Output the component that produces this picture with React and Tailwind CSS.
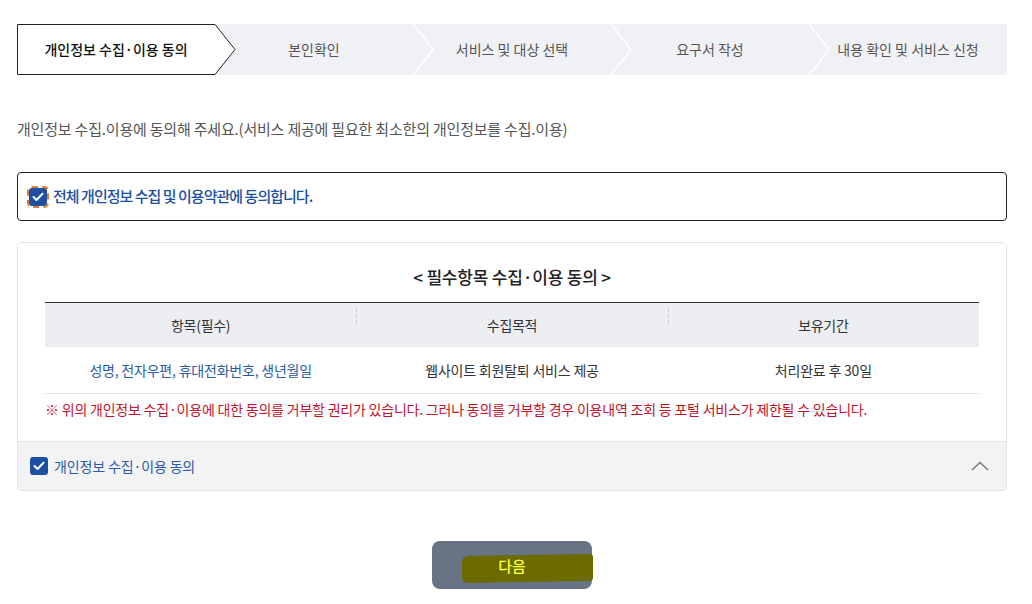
import React from 'react';

const font = { fontFamily: '"Noto Sans CJK KR", "Noto Sans", sans-serif' };

const steps = ['개인정보 수집·이용 동의', '본인확인', '서비스 및 대상 선택', '요구서 작성', '내용 확인 및 서비스 신청'];

const CheckBox = ({ focused }) => (
  <span
    className={`flex h-[18px] w-[18px] shrink-0 items-center justify-center rounded-[3px] bg-[#1d4fa3] ${
      focused ? 'outline-2 outline-dashed outline-[#e8792c] outline-offset-0' : ''
    }`}
  >
    <svg width="12" height="10" viewBox="0 0 12 10" fill="none">
      <path d="M1.5 5 L4.5 8 L10.5 1.8" stroke="white" strokeWidth="2" strokeLinecap="round" strokeLinejoin="round" />
    </svg>
  </span>
);

const Stepper = () => (
  <div className="relative flex h-[51px] w-[990px] bg-[#f0f1f4]">
    <svg className="absolute left-0 top-0" width="990" height="51" viewBox="0 0 990 51" fill="none">
      <path d="M0.5 0.5 H198 L218 25.5 L198 50.5 H0.5 Z" fill="white" stroke="#222" strokeWidth="1" />
      <path d="M396 0 L416 25.5 L396 51" stroke="white" strokeWidth="1.5" />
      <path d="M594 0 L614 25.5 L594 51" stroke="white" strokeWidth="1.5" />
      <path d="M792 0 L812 25.5 L792 51" stroke="white" strokeWidth="1.5" />
    </svg>
    {steps.map((s, i) => (
      <div
        key={s}
        className={`relative z-10 flex w-[198px] items-center justify-center text-[14px] ${
          i === 0 ? 'text-[#111] font-medium' : 'text-[#555]'
        }`}
      >
        {s}
      </div>
    ))}
  </div>
);

export default function App() {
  return (
    <div className="min-h-[604px] w-[1032px] bg-white pl-[17px] pt-[24px]" style={font}>
      <Stepper />

      <p className="mt-[44px] text-[15px] leading-[20px] tracking-[-0.013em] text-[#555]">
        개인정보 수집.이용에 동의해 주세요.(서비스 제공에 필요한 최소한의 개인정보를 수집.이용)
      </p>

      <div className="mt-[33px] flex h-[49px] w-[990px] items-center gap-[6px] rounded-[4px] border border-[#222] pl-[11px]">
        <CheckBox focused />
        <span className="text-[15px] font-medium tracking-[-0.065em] text-[#1d4fa3]">
          전체 개인정보 수집 및 이용약관에 동의합니다.
        </span>
      </div>

      <div className="mt-[21px] w-[990px] overflow-hidden rounded-[5px] border border-[#e3e3e3]">
        <div className="bg-white px-[27px] pb-[24px] pt-[22px]">
          <h3 className="text-center text-[17px] font-medium leading-[24px] tracking-[-0.012em] text-[#222]">
            &lt; 필수항목 수집·이용 동의 &gt;
          </h3>
          <div className="mt-[13px] border-t border-[#333]">
            <div className="grid h-[44px] grid-cols-3 items-center bg-[#eceef2] text-[14px] tracking-[-0.02em] text-[#333]">
              <div className="text-center">항목(필수)</div>
              <div className="relative text-center">
                <span className="absolute left-0 top-[-6px] h-[14px] border-l border-dashed border-[#c8c8c8]" />
                수집목적
              </div>
              <div className="relative text-center">
                <span className="absolute left-0 top-[-6px] h-[14px] border-l border-dashed border-[#c8c8c8]" />
                보유기간
              </div>
            </div>
            <div className="grid h-[47px] grid-cols-3 items-center border-b border-[#e1e1e1] text-[14px] tracking-[-0.015em]">
              <div className="text-center text-[#2a5aa8]">성명, 전자우편, 휴대전화번호, 생년월일</div>
              <div className="text-center text-[#333]">웹사이트 회원탈퇴 서비스 제공</div>
              <div className="text-center text-[#333]">처리완료 후 30일</div>
            </div>
          </div>
          <p className="mt-[7px] text-[14px] leading-[16px] tracking-[-0.015em] text-[#c0142a]">
            ※ 위의 개인정보 수집·이용에 대한 동의를 거부할 권리가 있습니다. 그러나 동의를 거부할 경우 이용내역 조회 등 포털 서비스가 제한될 수 있습니다.
          </p>
        </div>
        <div className="flex h-[49px] items-center justify-between border-t border-[#e3e3e3] bg-[#f3f3f3] pl-[12px] pr-[16px]">
          <div className="flex items-center gap-[6px]">
            <CheckBox />
            <span className="text-[14px] tracking-[-0.01em] text-[#2a5aa8]">개인정보 수집·이용 동의</span>
          </div>
          <svg width="20" height="12" viewBox="0 0 20 12" fill="none">
            <path d="M2 10 L10 2.5 L18 10" stroke="#777" strokeWidth="1.4" />
          </svg>
        </div>
      </div>

      <div className="mt-[50px] flex w-[990px] justify-center">
        <button className="relative h-[48px] w-[160px] rounded-[8px] bg-[#687385]">
          <span className="absolute left-[30px] top-[14px] h-[27px] w-[131px] -skew-y-1 rounded-l-[6px] rounded-r-[3px] bg-[#6b6b00]" />
          <span className="relative text-[15px] font-medium text-[#ffff33]">다음</span>
        </button>
      </div>
    </div>
  );
}
